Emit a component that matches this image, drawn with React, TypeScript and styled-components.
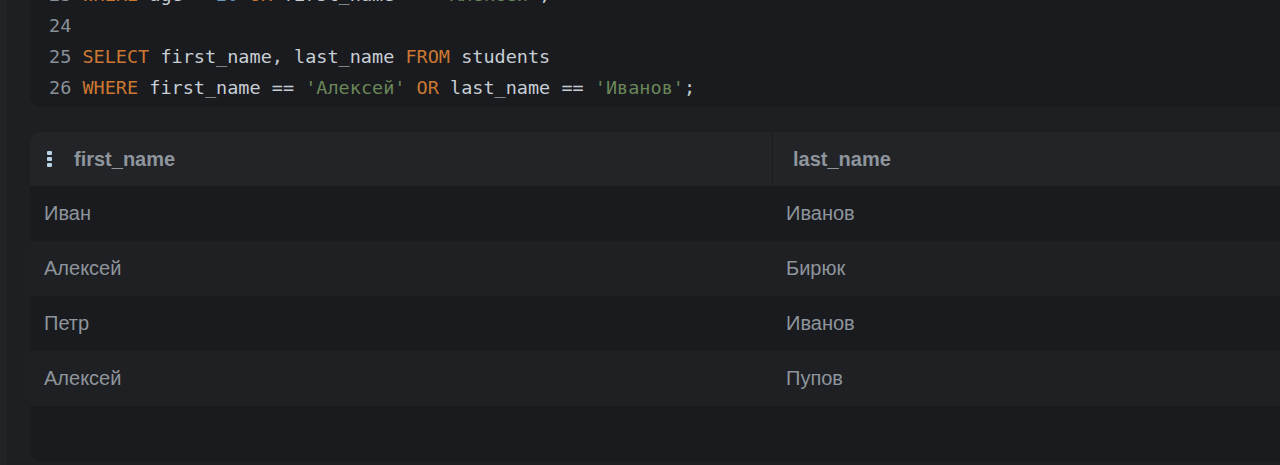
import React from 'react'
import styled, { createGlobalStyle } from 'styled-components'

const palette = {
  page: '#1e1f23',
  strip: '#222327',
  editor: '#1a1b1f',
  header: '#232428',
  rowLight: '#1f2024',
  rowDark: '#1a1b1f',
  divider: '#1b1c20',
  text: '#8e959c',
  lineNo: '#8a9098',
  ident: '#c7ced5',
  keyword: '#cc7832',
  string: '#6a8759',
  number: '#6897bb',
}

type Token = { t: string; k?: 'kw' | 'str' | 'num' }

const code: { n: number; tokens: Token[] }[] = [
  {
    n: 23,
    tokens: [
      { t: 'WHERE', k: 'kw' },
      { t: ' age < ' },
      { t: '20', k: 'num' },
      { t: ' ' },
      { t: 'OR', k: 'kw' },
      { t: ' first_name == ' },
      { t: "'Алексей'", k: 'str' },
      { t: ';' },
    ],
  },
  { n: 24, tokens: [] },
  {
    n: 25,
    tokens: [
      { t: 'SELECT', k: 'kw' },
      { t: ' first_name, last_name ' },
      { t: 'FROM', k: 'kw' },
      { t: ' students' },
    ],
  },
  {
    n: 26,
    tokens: [
      { t: 'WHERE', k: 'kw' },
      { t: ' first_name == ' },
      { t: "'Алексей'", k: 'str' },
      { t: ' ' },
      { t: 'OR', k: 'kw' },
      { t: ' last_name == ' },
      { t: "'Иванов'", k: 'str' },
      { t: ';' },
    ],
  },
]

const rows = [
  ['Иван', 'Иванов'],
  ['Алексей', 'Бирюк'],
  ['Петр', 'Иванов'],
  ['Алексей', 'Пупов'],
]

const App = () => {
  return (
    <>
      <GlobalStyle />
      <Page>
        <Strip />
        <Main>
          <Editor>
            <CodeLines>
              {code.map(line => (
                <CodeLine key={line.n}>
                  <LineNo>{line.n}</LineNo>{' '}
                  {line.tokens.map((tok, i) => (
                    <Tok key={i} kind={tok.k}>
                      {tok.t}
                    </Tok>
                  ))}
                </CodeLine>
              ))}
            </CodeLines>
          </Editor>
          <Table>
            <HeaderRow>
              <HeadCell first>
                <svg width="6" height="17" viewBox="0 0 6 17">
                  <rect x="0" y="0" width="5" height="4" rx="1" fill="#b9d3e6" />
                  <rect x="0" y="6" width="5" height="4" rx="1" fill="#b9d3e6" />
                  <rect x="0" y="12" width="5" height="4" rx="1" fill="#b9d3e6" />
                </svg>
                first_name
              </HeadCell>
              <HeadCell>last_name</HeadCell>
            </HeaderRow>
            {rows.map((r, i) => (
              <Row key={i} light={i % 2 === 1}>
                <Cell first>{r[0]}</Cell>
                <Cell>{r[1]}</Cell>
              </Row>
            ))}
            <Row light={false} />
          </Table>
        </Main>
      </Page>
    </>
  )
}

const GlobalStyle = createGlobalStyle`
  html, body {
    margin: 0;
    padding: 0;
    background: ${palette.page};
    overflow: hidden;
  }
`

const Page = styled.div`
  display: flex;
  height: 465px;
  background: ${palette.page};
`

const Strip = styled.div`
  width: 7px;
  flex-shrink: 0;
  background: ${palette.strip};
  border-right: 1px solid #1c1d21;
`

const Main = styled.div`
  flex: 1;
  display: flex;
  flex-direction: column;
  gap: 25px;
  padding-left: 22px;
  min-width: 0;
`

const Editor = styled.div`
  height: 107px;
  overflow: hidden;
  background: ${palette.editor};
  border-radius: 0 0 0 10px;
`

const CodeLines = styled.div`
  margin-top: -21px;
  padding-left: 19px;
  font-family: 'DejaVu Sans Mono', monospace;
  font-size: 18.5px;
  line-height: 31px;
  color: ${palette.ident};
  white-space: pre;
`

const CodeLine = styled.div`
  height: 31px;
`

const LineNo = styled.span`
  color: ${palette.lineNo};
`

const Tok = styled.span<{ kind?: 'kw' | 'str' | 'num' }>`
  color: ${p =>
    p.kind === 'kw'
      ? palette.keyword
      : p.kind === 'str'
        ? palette.string
        : p.kind === 'num'
          ? palette.number
          : palette.ident};
`

const Table = styled.div`
  display: flex;
  flex-direction: column;
  border-radius: 10px 0 0 10px;
  overflow: hidden;
  font-family: 'Liberation Sans', Arial, sans-serif;
  font-size: 20px;
  color: ${palette.text};
`

const HeaderRow = styled.div`
  display: grid;
  grid-template-columns: 743px 1fr;
  height: 54px;
  background: ${palette.header};
`

const HeadCell = styled.div<{ first?: boolean }>`
  display: flex;
  align-items: center;
  gap: 21px;
  padding-left: ${p => (p.first ? '17px' : '20px')};
  font-weight: bold;
  border-right: ${p => (p.first ? `1px solid ${palette.divider}` : 'none')};
`

const Row = styled.div<{ light: boolean }>`
  display: grid;
  grid-template-columns: 743px 1fr;
  height: 55px;
  background: ${p => (p.light ? palette.rowLight : palette.rowDark)};
`

const Cell = styled.div<{ first?: boolean }>`
  display: flex;
  align-items: center;
  padding-left: ${p => (p.first ? '14px' : '13px')};
`

export default App
